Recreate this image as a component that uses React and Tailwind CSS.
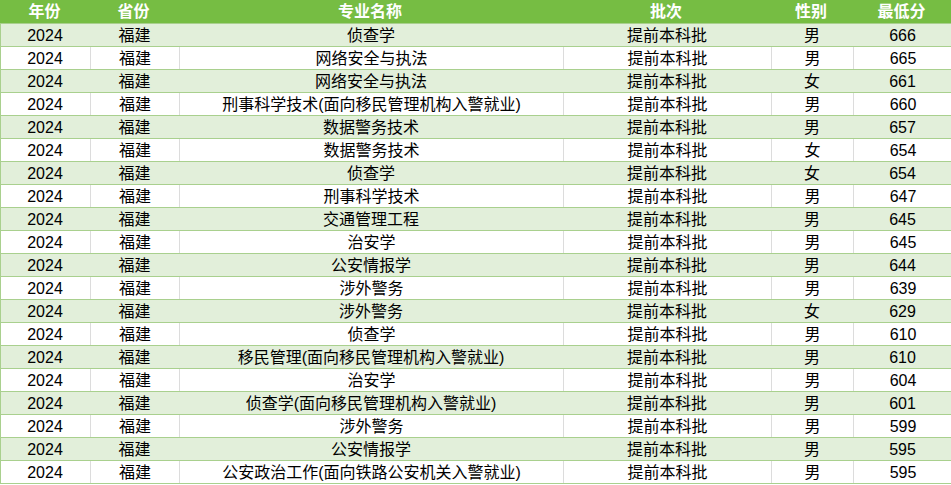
import React from "react";

const rows = [
  ["侦查学", "男", 666],
  ["网络安全与执法", "男", 665],
  ["网络安全与执法", "女", 661],
  ["刑事科学技术(面向移民管理机构入警就业)", "男", 660],
  ["数据警务技术", "男", 657],
  ["数据警务技术", "女", 654],
  ["侦查学", "女", 654],
  ["刑事科学技术", "男", 647],
  ["交通管理工程", "男", 645],
  ["治安学", "男", 645],
  ["公安情报学", "男", 644],
  ["涉外警务", "男", 639],
  ["涉外警务", "女", 629],
  ["侦查学", "男", 610],
  ["移民管理(面向移民管理机构入警就业)", "男", 610],
  ["治安学", "男", 604],
  ["侦查学(面向移民管理机构入警就业)", "男", 601],
  ["涉外警务", "男", 599],
  ["公安情报学", "男", 595],
  ["公安政治工作(面向铁路公安机关入警就业)", "男", 595],
];

const cols = "grid grid-cols-[89px_89px_384px_208px_82px_99px]";

export default function App() {
  return (
    <div
      className="w-[951px] h-[485px] bg-white overflow-hidden text-[16px] text-black"
      style={{ fontFamily: '"Liberation Sans", "Noto Sans CJK SC", sans-serif' }}
    >
      <div className={`${cols} h-[24px] bg-[#76bd43] border-b border-[#a9d08e] font-bold text-white`}>
        {["年份", "省份", "专业名称", "批次", "性别", "最低分"].map((h) => (
          <div key={h} className="flex items-center justify-center leading-none pt-px">
            {h}
          </div>
        ))}
      </div>
      {rows.map((r, i) => {
        const green = i % 2 === 0;
        const cell = green
          ? "flex items-center justify-center leading-none pt-[2px]"
          : "flex items-center justify-center leading-none pt-[2px] border-l border-[#dcdcdc]";
        return (
          <div
            key={i}
            className={`${cols} h-[23px] border-b border-l border-[#a9d08e] ${
              green ? "bg-[#e2efda]" : "bg-white"
            }`}
          >
            <div className="flex items-center justify-center leading-none pt-[2px] -ml-px">2024</div>
            <div className={cell}>福建</div>
            <div className={cell}>{r[0]}</div>
            <div className={cell}>提前本科批</div>
            <div className={cell}>{r[1]}</div>
            <div className={cell}>{r[2]}</div>
          </div>
        );
      })}
    </div>
  );
}
